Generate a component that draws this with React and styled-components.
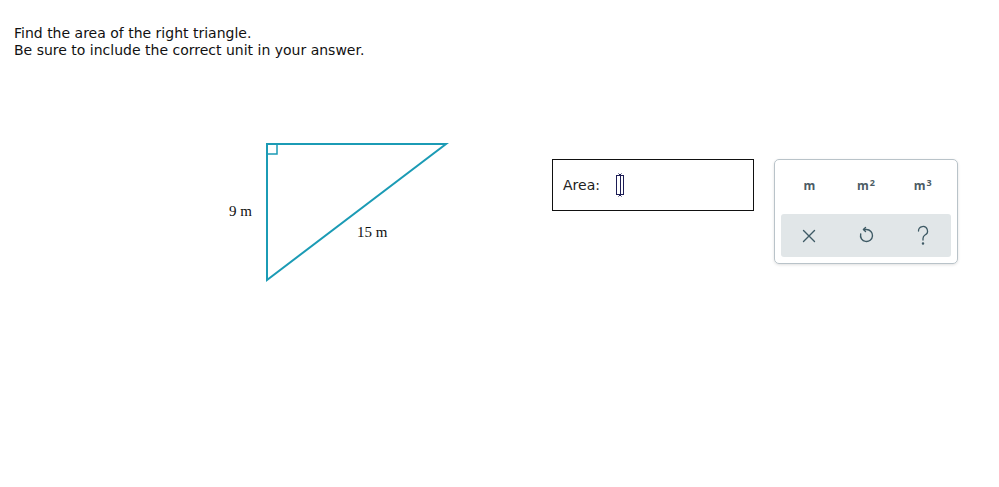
import React from 'react'
import styled, { createGlobalStyle } from 'styled-components'

const GlobalStyle = createGlobalStyle`
  body {
    margin: 0;
    background: #fff;
    font-family: "DejaVu Sans", Verdana, sans-serif;
  }
`

const Page = styled.div`
  width: 999px;
  height: 487px;
  padding: 25px 14px;
  box-sizing: border-box;
  background: #fff;
`

const Prompt = styled.div`
  font-size: 14px;
  line-height: 17px;
  color: #111;
`

const Workspace = styled.div`
  display: flex;
  align-items: flex-start;
  margin-top: 81px;
  padding-left: 211px;
`

const Figure = styled.svg`
  display: block;
  flex: none;
`

const AnswerBox = styled.div`
  margin-top: 19px;
  margin-left: 97px;
  width: 190px;
  height: 50px;
  border: 1px solid #111;
  display: flex;
  align-items: center;
  padding-left: 10px;
  box-sizing: content-box;
  font-size: 14px;
  color: #222;
  gap: 14px;
`

const Keypad = styled.div`
  margin-top: 19px;
  margin-left: 20px;
  width: 170px;
  height: 97px;
  border: 1px solid #b9c3c9;
  border-radius: 5px;
  box-shadow: 0 1px 3px rgba(0, 0, 0, 0.12);
  padding: 0 6px 6px;
  box-sizing: content-box;
  display: flex;
  flex-direction: column;
`

const UnitRow = styled.div`
  display: grid;
  grid-template-columns: repeat(3, 1fr);
  height: 54px;
  padding-bottom: 4px;
  box-sizing: border-box;
  align-items: center;
`

const UnitKey = styled.div`
  text-align: center;
  font-family: "Open Sans", "DejaVu Sans", sans-serif;
  font-weight: 700;
  font-size: 12px;
  color: #4c5b64;
  sup {
    font-size: 9px;
    line-height: 0;
    vertical-align: 4px;
    margin-left: 1px;
  }
`

const ActionRow = styled.div`
  display: grid;
  grid-template-columns: repeat(3, 1fr);
  flex: 1;
  align-items: center;
  background: #e1e6e8;
  border-radius: 3px;
`

const ActionKey = styled.div`
  display: flex;
  justify-content: center;
  align-items: center;
  color: #3e5a65;
`

const Cursor = () => (
  <svg width="12" height="26" viewBox="0 0 12 26">
    <g fill="none" stroke="#1d1d55" strokeWidth="1">
      <rect x="2.5" y="3.5" width="7" height="19" />
      <line x1="6.5" y1="3.5" x2="6.5" y2="22.5" />
      <path d="M4.5 1.5 L6 3 L7.5 1.5 M4.5 24.5 L6 23 L7.5 24.5" />
    </g>
  </svg>
)

const teal = '#1b9bb5'

export default function App() {
  return (
    <Page>
      <GlobalStyle />
      <Prompt>
        <div>Find the area of the right triangle.</div>
        <div>Be sure to include the correct unit in your answer.</div>
      </Prompt>
      <Workspace>
        <Figure width="230" height="145" viewBox="0 0 230 145">
          <polygon points="42,4 221,4 42,140" fill="none" stroke={teal} strokeWidth="2" strokeLinejoin="miter" />
          <polyline points="42,14 52,14 52,4" fill="none" stroke={teal} strokeWidth="1.5" />
          <text x="4" y="76" fontFamily="'Liberation Serif', serif" fontSize="15" fill="#111">9 m</text>
          <text x="132" y="97" fontFamily="'Liberation Serif', serif" fontSize="15" fill="#111">15 m</text>
        </Figure>
        <AnswerBox>
          <span>Area:</span>
          <Cursor />
        </AnswerBox>
        <Keypad>
          <UnitRow>
            <UnitKey>m</UnitKey>
            <UnitKey>m<sup>2</sup></UnitKey>
            <UnitKey>m<sup>3</sup></UnitKey>
          </UnitRow>
          <ActionRow>
            <ActionKey>
              <svg width="16" height="16" viewBox="0 0 16 16" fill="none" stroke="currentColor" strokeWidth="1.4" strokeLinecap="round">
                <path d="M2.5 2.5 L13.5 13.5 M13.5 2.5 L2.5 13.5" />
              </svg>
            </ActionKey>
            <ActionKey>
              <svg width="16" height="20" viewBox="0 0 16 20" fill="none" stroke="currentColor" strokeWidth="1.4" strokeLinecap="round" strokeLinejoin="round">
                <path d="M5.5 3.5 H8.5 A6 6 0 1 1 2.7 8" />
                <path d="M7.5 1.5 L5.5 3.5 L7.5 5.5" />
              </svg>
            </ActionKey>
            <ActionKey>
              <svg width="14" height="22" viewBox="0 0 14 22" fill="none" stroke="currentColor" strokeWidth="1.3" strokeLinecap="round">
                <path d="M2.5 6 A4.5 4.5 0 1 1 9 10 C7.5 11 7 12 7 13.5 V15" />
                <circle cx="7" cy="18.5" r="0.6" fill="currentColor" />
              </svg>
            </ActionKey>
          </ActionRow>
        </Keypad>
      </Workspace>
    </Page>
  )
}
